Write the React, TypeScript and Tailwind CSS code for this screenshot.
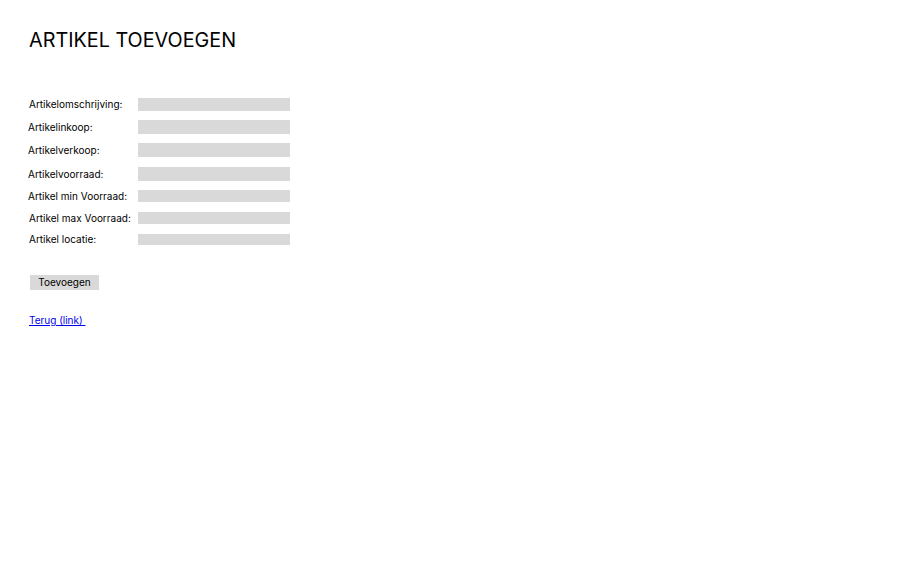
const fields = [
  { label: "Artikelomschrijving:", top: "mt-0", h: "h-[13px]", indent: "pl-[1px]" },
  { label: "Artikelinkoop:", top: "mt-[9px]", h: "h-[14px]", indent: "pl-0" },
  { label: "Artikelverkoop:", top: "mt-[9px]", h: "h-[14px]", indent: "pl-0" },
  { label: "Artikelvoorraad:", top: "mt-[10px]", h: "h-[14px]", indent: "pl-0" },
  { label: "Artikel min Voorraad:", top: "mt-[9px]", h: "h-[12px]", indent: "pl-0" },
  { label: "Artikel max Voorraad:", top: "mt-[10px]", h: "h-[12px]", indent: "pl-[1px]" },
  { label: "Artikel locatie:", top: "mt-[10px]", h: "h-[11px]", indent: "pl-[1px]" },
];

export default function App() {
  return (
    <div className="min-h-[561px] w-full bg-white text-black font-['Inter',sans-serif]">
      <div className="pl-[28px] pt-[28px]">
        <h1 className="pl-[1px] text-[19.8px] leading-[24px] font-normal">
          ARTIKEL TOEVOEGEN
        </h1>

        {/* Form */}
        <form className="mt-[46px] flex flex-col" onSubmit={(e) => e.preventDefault()}>
          {fields.map((f) => (
            <div key={f.label} className={`flex items-center ${f.top}`}>
              <label className={`w-[110px] text-[10px] leading-[12px] -mt-[1px] ${f.indent}`}>
                {f.label}
              </label>
              <input
                type="text"
                className={`w-[152px] ${f.h} bg-[#d9d9d9] outline-none border-0`}
              />
            </div>
          ))}

          <button
            type="submit"
            className="mt-[30px] ml-[2px] w-[69px] h-[15px] bg-[#d9d9d9] text-[10px] leading-[15px] text-black"
          >
            Toevoegen
          </button>
        </form>

        <a href="#" className="mt-[24px] ml-[1px] inline-block text-[10px] leading-[12px] text-[#0000ee] underline">
          Terug (link)&nbsp;
        </a>
      </div>
    </div>
  );
}
